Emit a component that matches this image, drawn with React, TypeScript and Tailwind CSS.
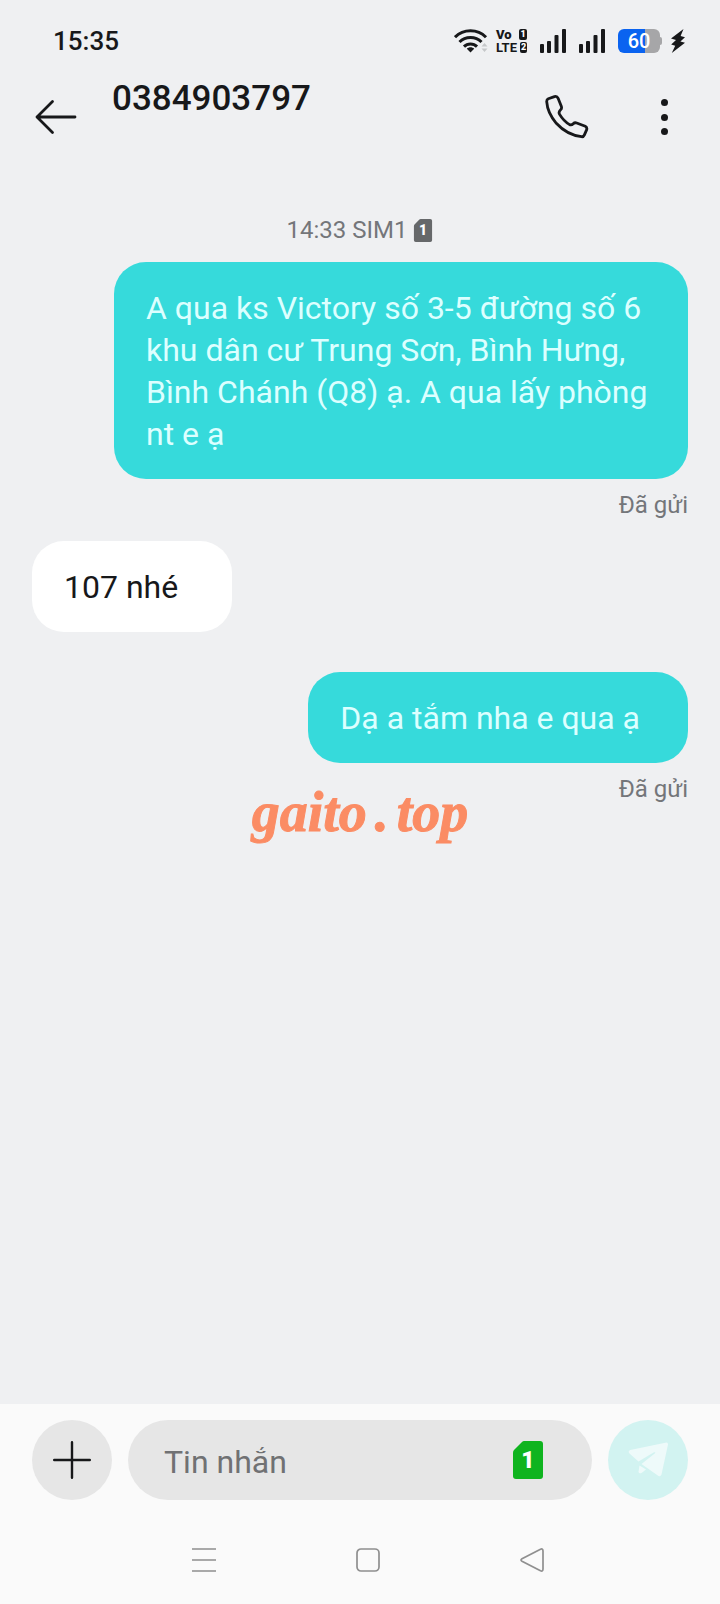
import React from 'react';

type Message = {
  id: number;
  text: string;
  mine: boolean;
  status?: string;
};

const messages: Message[] = [
  {
    id: 1,
    text: 'A qua ks Victory số 3-5 đường số 6 khu dân cư Trung Sơn, Bình Hưng, Bình Chánh (Q8) ạ. A qua lấy phòng nt e ạ',
    mine: true,
    status: 'Đã gửi',
  },
  { id: 2, text: '107 nhé', mine: false },
  { id: 3, text: 'Dạ a tắm nha e qua ạ', mine: true, status: 'Đã gửi' },
];

export default function App() {
  return (
    <div className="relative flex min-h-screen flex-col bg-[#eff0f2] font-['Roboto',sans-serif] text-[#17181a]">
      <StatusBar />
      <Header />

      <main className="flex-1 px-8 pt-[62px]">
        <div className="flex items-center justify-center gap-1.5 text-2xl text-[#74767a]">
          <span>14:33 SIM1</span>
          <SimBadge className="h-[23px] w-5 text-[#66686a]" />
        </div>
        <div className="relative mt-4 flex flex-col">
          {messages.map((message) => (
            <Bubble key={message.id} message={message} />
          ))}
          {/* Watermark over the thread */}
          <div className="absolute top-[518px] left-1/2 -translate-x-1/2 font-['Liberation_Serif',serif] text-[56px] leading-[64px] font-bold whitespace-nowrap text-[#fb8c64] italic [-webkit-text-stroke:1px_#fb8c64]">
            gaito<span className="mx-2">.</span>top
          </div>
        </div>
      </main>

      <Composer />
    </div>
  );
}

function StatusBar() {
  return (
    <div className="flex h-[82px] items-center justify-between pr-[34px] pl-[53px]">
      <span className="text-[26px] font-medium">15:35</span>
      <div className="flex items-center">
        <WifiIcon />
        <VolteIcon />
        <SignalIcon />
        <SignalIcon />
        <div className="relative ml-[13px] flex h-6 w-[42px] items-center justify-center rounded-md bg-linear-to-r from-[#0a63f0] from-64% to-[#a6a6a8] to-64%">
          <span className="text-xl font-medium text-white">60</span>
          <span className="absolute top-2 -right-0.5 h-2 w-0.5 rounded-r bg-[#a6a6a8]" />
        </div>
        <svg className="ml-2.5 h-6 w-4" viewBox="0 0 16 24" fill="currentColor">
          <path d="M13.5 0 1 9.500 6 11 1.200 15.500l4 1.200L1.800 24 15 13.800l-4.600-1.400L15 8.300l-4.400-1.200Z" />
        </svg>
      </div>
    </div>
  );
}

function WifiIcon() {
  return (
    <svg className="h-6 w-9" viewBox="0 0 36 24" fill="none" stroke="currentColor" strokeWidth="3">
      <path d="M1 8.200C9.500-.3 23.500-.3 32 8.200" />
      <path d="M5.500 13C11.500 6.900 21.500 6.900 27.500 13" />
      <path d="M10 17.600C13.600 14 19.400 14 23 17.600" />
      <path d="m12.800 19.800 3.700 3.700 3.700-3.700c-2-2-5.400-2-7.400 0Z" fill="currentColor" stroke="none" />
      <path d="m27.500 17.500 3-3.500 3 3.500ZM27.500 19.500l3 3.500 3-3.500Z" fill="#c6c8ca" stroke="none" />
    </svg>
  );
}

function VolteIcon() {
  return (
    <div className="ml-1.5 w-[31px] text-[13px] leading-[13px] font-black">
      <div className="flex items-center justify-between">
        <span>Vo</span>
        <span className="flex h-[11px] w-2 items-center justify-center rounded-xs bg-[#17181a] text-[9px] leading-[9px] text-white">1</span>
      </div>
      <div className="flex items-center justify-between">
        <span className="font-bold">LTE</span>
        <span className="flex h-[11px] w-[7px] items-center justify-center rounded-xs bg-[#17181a] text-[9px] leading-[9px] text-white">2</span>
      </div>
    </div>
  );
}

function SignalIcon() {
  return (
    <svg className="ml-[13px] h-6 w-[26px]" viewBox="0 0 26 24" fill="currentColor">
      <rect x="0" y="15" width="4" height="9" rx="1" />
      <rect x="7" y="12" width="4" height="12" rx="1" />
      <rect x="14.500" y="6" width="4" height="18" rx="1" />
      <rect x="22" y="0" width="4" height="24" rx="1" />
    </svg>
  );
}

function Header() {
  return (
    <header className="flex h-[70px] items-center pr-[49px] pl-[35px]">
      <button aria-label="Back" className="h-9 w-[42px]">
        <svg viewBox="0 0 42 36" fill="none" stroke="currentColor" strokeWidth="2.800" strokeLinecap="round" strokeLinejoin="round">
          <path d="M17.500 2.500 2 18l15.500 15.500M2 18h38" />
        </svg>
      </button>
      <h1 className="ml-[35px] flex-1 self-start text-[35px] leading-[34px] font-medium">0384903797</h1>
      <button aria-label="Call" className="size-11">
        <svg viewBox="0 0 44 44" fill="none" stroke="currentColor" strokeWidth="2.800" strokeLinejoin="round">
          <path d="M3.300 3.800 9.500 1.600Q12 .9 13.100 3.300l3.300 8.300Q17 13.500 15.600 14.800 13.200 17 14.600 19.400 18.800 26.300 24.600 29.600 26.600 30.500 28.200 28.700 29.700 27.300 31.700 28l8.600 3.300Q42.300 32.300 41.700 34.600l-2.300 5.300Q38.500 42 36.500 41.700 22 40 11.300 28.300 2.500 18 1.700 6.700 1.600 4.600 3.300 3.800Z" />
        </svg>
      </button>
      <button aria-label="More options" className="ml-[68px] flex h-9 w-[14px] flex-col items-center justify-between">
        <span className="size-[7px] rounded-full bg-[#17181a]" />
        <span className="size-[7px] rounded-full bg-[#17181a]" />
        <span className="size-[7px] rounded-full bg-[#17181a]" />
      </button>
    </header>
  );
}

function Bubble({ message }: { message: Message }) {
  if (!message.mine) {
    return (
      <div className="mb-10 flex">
        <p className="max-w-[574px] min-w-[200px] rounded-[32px] bg-white pt-[25px] pr-12 pb-6 pl-8 text-[32px] leading-[42px]">
          {message.text}
        </p>
      </div>
    );
  }

  return (
    <div className="mb-5 flex flex-col items-end">
      <p
        className={`max-w-[574px] rounded-[32px] bg-[#36dadb] pt-[25px] pb-6 pl-8 text-[32px] leading-[42px] text-[#dcffff] ${
          message.text.length > 40 ? 'pr-8' : 'pr-12'
        }`}
      >
        {message.text}
      </p>
      <span className="mt-2.5 text-2xl leading-8 text-[#74767a]">{message.status}</span>
    </div>
  );
}

function SimBadge({ className }: { className: string }) {
  return (
    <svg className={className} viewBox="0 0 30 38">
      <path d="M11 0h16q3 0 3 3v32q0 3-3 3H3q-3 0-3-3V11.500Q0 10 1 9l8-8q1-1 2-1Z" fill="currentColor" />
      <text x="15" y="27" textAnchor="middle" fill="#fff" fontSize="23" fontWeight="900">
        1
      </text>
    </svg>
  );
}

function Composer() {
  return (
    <footer className="bg-[#fafafa] px-8 pt-4">
      <div className="flex items-center gap-4">
        <button aria-label="Add attachment" className="flex size-20 items-center justify-center rounded-full bg-[#e6e6e6]">
          <svg className="size-[38px]" viewBox="0 0 38 38" stroke="currentColor" strokeWidth="2.400" strokeLinecap="round">
            <path d="M19 1.200v35.600M1.200 19h35.600" />
          </svg>
        </button>
        <div className="flex h-20 min-w-0 flex-1 items-center rounded-full bg-[#e6e6e6] pr-[49px] pl-9">
          <input
            aria-label="Tin nhắn"
            placeholder="Tin nhắn"
            className="min-w-0 flex-1 bg-transparent pt-1 text-[32px] outline-none placeholder:text-[#707173]"
          />
          <button aria-label="SIM 1">
            <SimBadge className="h-[38px] w-[30px] text-[#0fb41f]" />
          </button>
        </div>
        <button aria-label="Send" className="flex size-20 items-center justify-center rounded-full bg-[#d2f3f1]">
          <svg className="size-10" viewBox="0 0 40 40" fill="#eefafa">
            <path d="M38.500 2.500 2.300 10Q-.5 11 1.500 13.500L10.500 21.500 26 12.300Q28 11.800 27 13.300L13.500 24 30.500 36Q32.500 37 33.500 34.500L40 4.500Q40 2.500 38.500 2.500Z" />
            <path d="M11.500 25.500 18 29.500 13.500 33Q11 34 10.500 32Z" />
          </svg>
        </button>
      </div>
      <nav className="flex h-[104px] items-center justify-between pt-4 pr-[144px] pl-40 text-[#8f8f8f]">
        <button aria-label="Recent apps">
          <svg className="size-6" viewBox="0 0 24 24" stroke="currentColor" strokeWidth="1.700">
            <path d="M0 1h24M0 12h24M0 23h24" />
          </svg>
        </button>
        <button aria-label="Home">
          <svg className="size-6" viewBox="0 0 24 24" fill="none" stroke="currentColor" strokeWidth="1.700">
            <rect x="1" y="1" width="22" height="22" rx="4" />
          </svg>
        </button>
        <button aria-label="Back to previous screen">
          <svg className="size-6" viewBox="0 0 24 24" fill="none" stroke="currentColor" strokeWidth="1.700" strokeLinejoin="round">
            <path d="M2 10.800 20.500 1.200Q23 .3 23 3v18Q23 23.700 20.500 22.800L2 13.200Q0 12 2 10.800Z" />
          </svg>
        </button>
      </nav>
    </footer>
  );
}
